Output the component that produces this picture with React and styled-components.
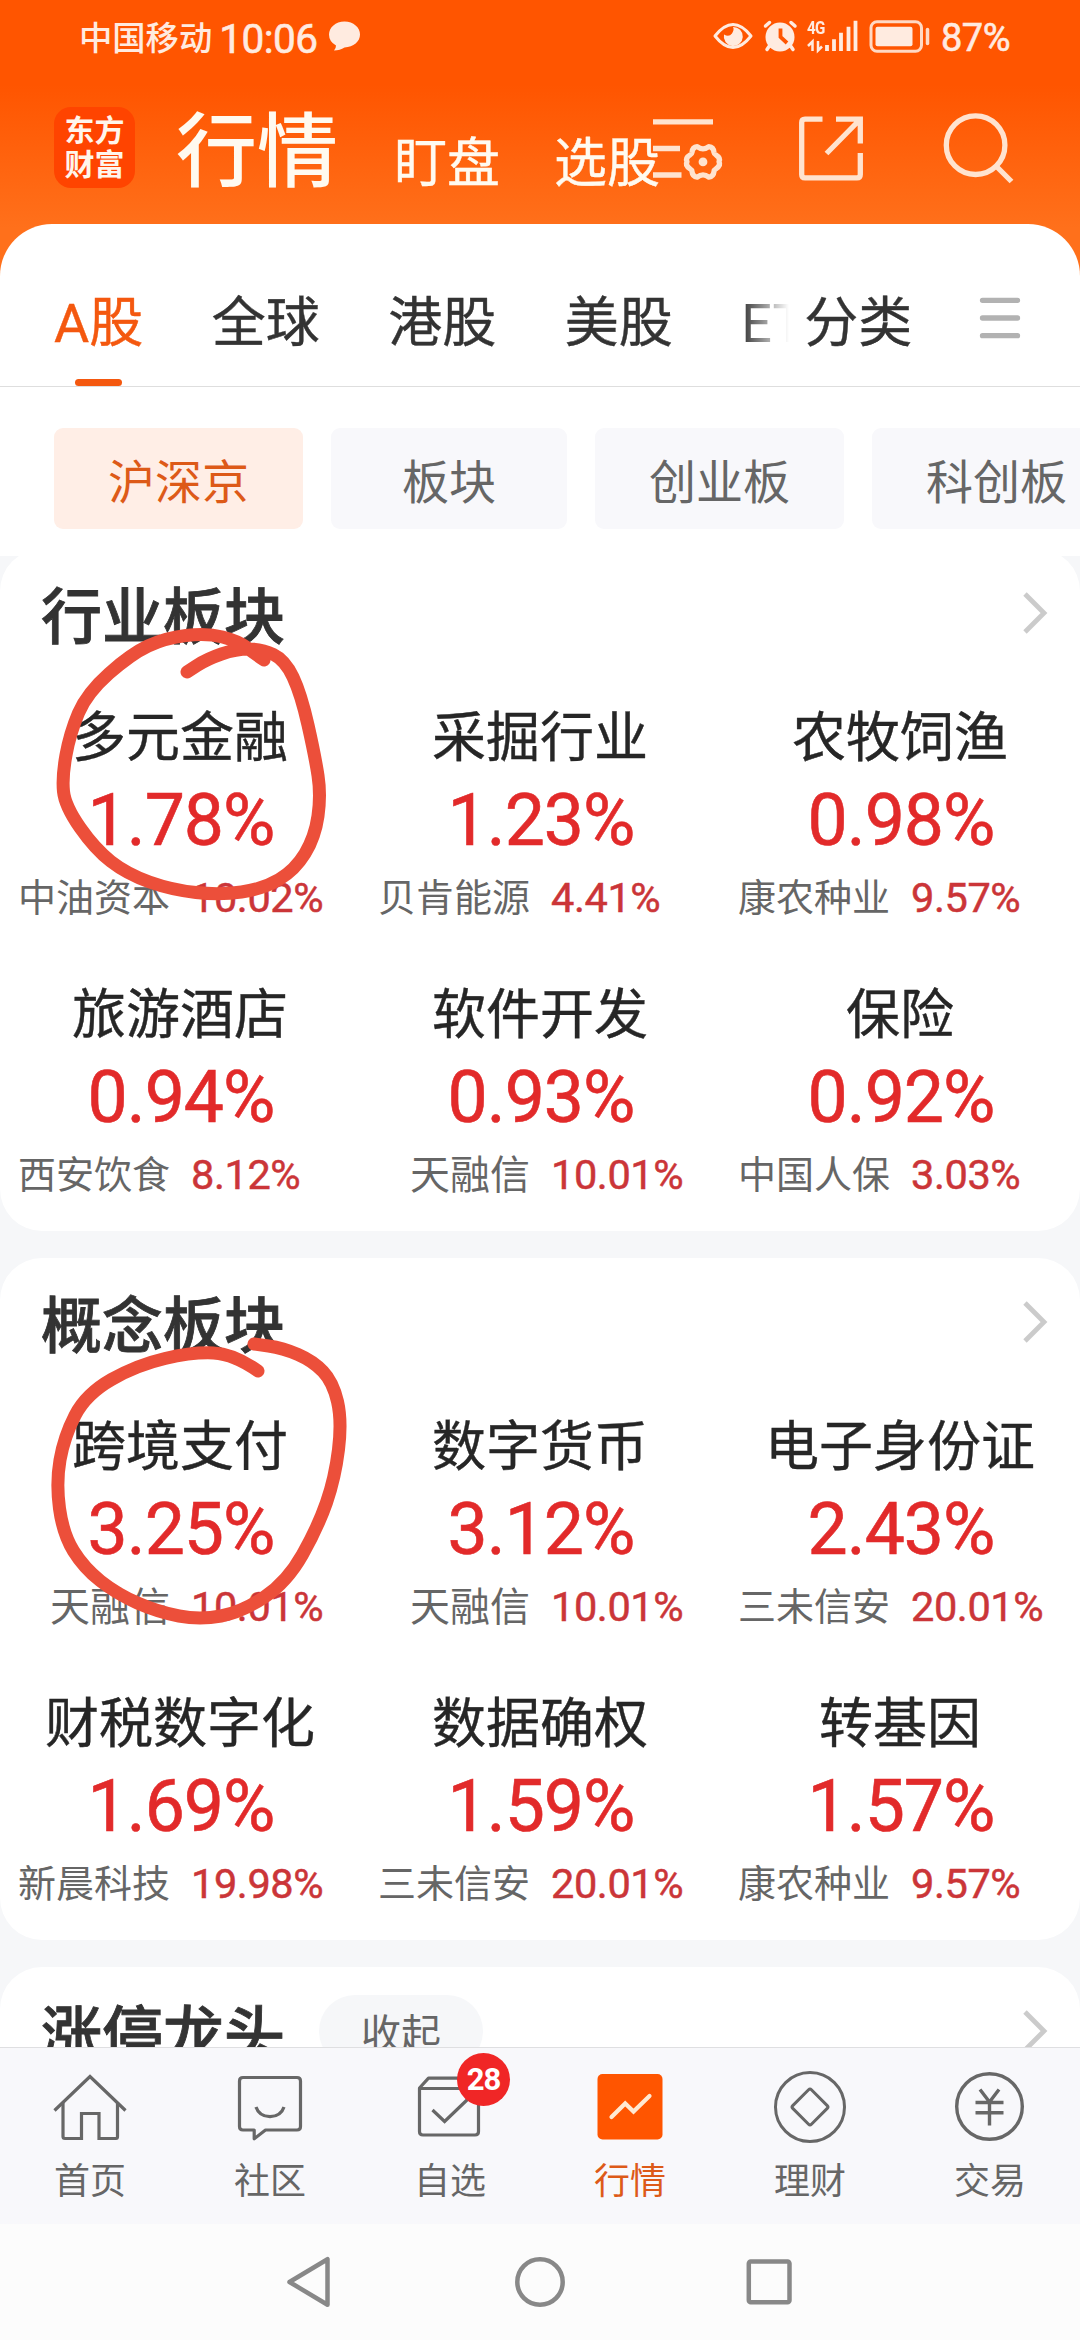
import styled, { createGlobalStyle } from "styled-components";

const industry = [
  { name: "多元金融", rate: "1.78%", stock: "中油资本", stockRate: "10.02%" },
  { name: "采掘行业", rate: "1.23%", stock: "贝肯能源", stockRate: "4.41%" },
  { name: "农牧饲渔", rate: "0.98%", stock: "康农种业", stockRate: "9.57%" },
  { name: "旅游酒店", rate: "0.94%", stock: "西安饮食", stockRate: "8.12%" },
  { name: "软件开发", rate: "0.93%", stock: "天融信", stockRate: "10.01%" },
  { name: "保险", rate: "0.92%", stock: "中国人保", stockRate: "3.03%" },
];

const concept = [
  { name: "跨境支付", rate: "3.25%", stock: "天融信", stockRate: "10.01%" },
  { name: "数字货币", rate: "3.12%", stock: "天融信", stockRate: "10.01%" },
  { name: "电子身份证", rate: "2.43%", stock: "三未信安", stockRate: "20.01%" },
  { name: "财税数字化", rate: "1.69%", stock: "新晨科技", stockRate: "19.98%" },
  { name: "数据确权", rate: "1.59%", stock: "三未信安", stockRate: "20.01%" },
  { name: "转基因", rate: "1.57%", stock: "康农种业", stockRate: "9.57%" },
];

const firstLoop = [
  [264, 660], [254, 653], [238, 641], [207, 633], [165, 638], [131, 654],
  [87, 693], [70, 733], [62, 777], [65, 806], [95, 849], [127, 874],
  [172, 890], [220, 895], [263, 889], [295, 870], [315, 837], [321, 795],
  [315, 756], [301, 694], [285, 660], [262, 649], [236, 649], [207, 659],
  [187, 672],
];

const secondLoop = [
  [258, 1371], [234, 1354], [193, 1352], [137, 1365], [86, 1394], [64, 1437],
  [56, 1483], [63, 1534], [84, 1568], [117, 1594], [158, 1612], [200, 1620],
  [242, 1612], [287, 1582], [318, 1527], [335, 1478], [342, 1421],
  [333, 1382], [313, 1361], [283, 1348], [254, 1344],
];

// joins the midpoints of a stroke with quadratic curves
function strokePath(points) {
  let d = `M${points[0].join(" ")}`;
  for (let i = 1; i < points.length - 1; i++) {
    const [x, y] = points[i];
    const [nx, ny] = points[i + 1];
    d += `Q${x} ${y} ${(x + nx) / 2} ${(y + ny) / 2}`;
  }
  return `${d}L${points[points.length - 1].join(" ")}`;
}

function StatusIcons() {
  return (
    <svg width="220" height="40" viewBox="712 17 220 40" fill="none">
      <path
        d="M715 36Q733 13 751 36Q733 59 715 36Z"
        stroke="#ffebe0"
        strokeWidth="3"
        strokeLinejoin="round"
      />
      <path
        d="M733 27A9.500 9.500 0 1 1 724 34.500Q729 37.500 732 33.500Q734.500 29.500 733 27Z"
        fill="#ffebe0"
      />
      <circle cx="780" cy="37" r="14.500" fill="#ffebe0" />
      <path
        d="M765.500 26L769.500 22.500M795 26L791 22.500M769 46.500L767 49.500M791 46.500L793 49.500"
        stroke="#ffebe0"
        strokeWidth="3.500"
        strokeLinecap="round"
      />
      <path d="M780.500 28.500V37L787 43" stroke="#ff5500" strokeWidth="3.800" />
      <path
        d="M808 46L812.500 41.500V51M818 41V50.500L822 46.500"
        stroke="#ffebe0"
        strokeWidth="2.500"
      />
      <path
        d="M827 51V45M834 51V39.300M841 51V32.700M848.500 51V26.700M855.500 51V20.700"
        stroke="#ffebe0"
        strokeWidth="3.800"
      />
      <rect x="871" y="21.800" width="50.500" height="29.500" rx="6" stroke="#ffd9c4" strokeWidth="3" />
      <rect x="875.500" y="26.700" width="37" height="19.600" rx="2" fill="#ffebe0" />
      <path d="M927.500 29.500V43.500" stroke="#ffd9c4" strokeWidth="3.500" strokeLinecap="round" />
    </svg>
  );
}

function HeaderIcons() {
  return (
    <svg width="370" height="80" viewBox="650 107.500 370 80" fill="none" stroke="#ffe3cf" strokeWidth="5.300">
      <path d="M653 121.300H713M653 148H680M653 174.500H681.500" />
      <path
        d="M697.200 146.200Q703 150.500 708.800 146.200Q713.500 146.500 714 152Q714.200 153.500 716 154.500Q721 157.500 719 161.300Q721 165 716 168.200Q714.200 169.200 714 171Q713.500 176.200 708.800 176.600Q703 172.200 697.200 176.600Q692.500 176.200 692 171Q691.800 169.200 690 168.200Q685 165 687 161.300Q685 157.500 690 154.500Q691.800 153.500 692 152Q692.500 146.500 697.200 146.200Z"
        strokeLinejoin="round"
      />
      <circle cx="703" cy="161.400" r="4.400" fill="#ffe3cf" stroke="none" />
      <path d="M822.500 118.600H805Q801.700 118.600 801.700 122V174Q801.700 177.400 805 177.400H857Q860.300 177.400 860.300 174V152.500" />
      <path d="M836 118.600H860.300V143M860 119L826.500 153" />
      <circle cx="975.600" cy="144.700" r="29.300" />
      <path d="M996 165.500L1011.500 181" />
    </svg>
  );
}

function Chevron() {
  return (
    <svg width="26" height="44" viewBox="0 0 26 44" fill="none">
      <path d="M3 3L22 22L3 41" stroke="#cbcbcb" strokeWidth="4.800" />
    </svg>
  );
}

function HomeIcon() {
  return (
    <svg width="76" height="76" viewBox="0 0 76 76" fill="none" stroke="#676767" strokeWidth="3.200">
      <path d="M2.500 41.500L38 7.500L73.500 41.500" />
      <path d="M11 34V67.500Q11 69.500 13 69.500H29.500V44.500H47V69.500H64Q65.500 69.500 65.500 67.500V34" />
    </svg>
  );
}

function ChatIcon() {
  return (
    <svg width="76" height="76" viewBox="0 0 76 76" fill="none" stroke="#676767" strokeWidth="3.200">
      <path
        d="M11 8.500H65Q68.500 8.500 68.500 12V57.500Q68.500 61 65 61H33.500L22.200 69.800V61H11Q7.500 61 7.500 57.500V12Q7.500 8.500 11 8.500Z"
        strokeLinejoin="round"
      />
      <path d="M24 38Q27 47.300 38 47.700Q49 47.300 52 38" />
    </svg>
  );
}

function PickIcon() {
  return (
    <svg width="76" height="76" viewBox="0 0 76 76" fill="none" stroke="#676767" strokeWidth="3.200">
      <path
        d="M7.500 19L16.500 9.200H58L66.500 19V62.500Q66.500 66 63 66H11Q7.500 66 7.500 62.500ZM7.500 19.500H66.500"
        strokeLinejoin="round"
      />
      <path d="M20.500 41L32.600 52.500L56 30" />
    </svg>
  );
}

function MarketIcon() {
  return (
    <svg width="76" height="76" viewBox="0 0 76 76" fill="none">
      <rect x="5.500" y="5" width="65" height="65.500" rx="5" fill="#ff5500" />
      <path
        d="M19.500 48L33.200 34.500L41.500 42.500L57.500 27"
        stroke="#ffe9d2"
        strokeWidth="4.200"
        strokeLinecap="round"
      />
    </svg>
  );
}

function WealthIcon() {
  return (
    <svg width="76" height="76" viewBox="0 0 76 76" fill="none" stroke="#676767" strokeWidth="3">
      <circle cx="38" cy="38" r="34.500" />
      <rect x="24.800" y="24.800" width="26.400" height="26.400" rx="2" transform="rotate(45 38 38)" />
    </svg>
  );
}

function TradeIcon() {
  return (
    <svg width="76" height="76" viewBox="0 0 76 76" fill="none" stroke="#676767" strokeWidth="3.400">
      <circle cx="37.500" cy="37.500" r="32.800" />
      <path d="M28 20.500L37.500 33L47 20.500M23.500 33.500H51.500M23.500 43.700H51.500M37.500 33V56.500" />
    </svg>
  );
}

const menu = [
  { label: "首页", icon: HomeIcon },
  { label: "社区", icon: ChatIcon },
  { label: "自选", icon: PickIcon, badge: "28" },
  { label: "行情", icon: MarketIcon, active: true },
  { label: "理财", icon: WealthIcon },
  { label: "交易", icon: TradeIcon },
];

function Board({ title, items }) {
  return (
    <Card>
      <Cardhead>
        <Cardtitle>{title}</Cardtitle>
        <Chevron />
      </Cardhead>
      <Boardgrid>
        {items.map((item) => (
          <Cell key={item.name}>
            <Cellname>{item.name}</Cellname>
            <Cellrate>{item.rate}</Cellrate>
            <Leader>
              <Leadername $small={item.stock.length > 3}>{item.stock}</Leadername>
              <Leaderrate>{item.stockRate}</Leaderrate>
            </Leader>
          </Cell>
        ))}
      </Boardgrid>
    </Card>
  );
}

function App() {
  return (
    <Screen>
      <Globalstyle />
      <Header>
        <Statusbar>
          <Carrier>中国移动</Carrier>
          <Clock>10:06</Clock>
          <Bubble width="33" height="30" viewBox="0 0 33 30">
            <path
              d="M16.500 0.500C25.500 0.500 32 6.500 32 13.500S25.500 26 16.500 26.500Q12 29.500 6 29.500Q8 27.500 8 24.500Q1 20.500 1 13.500C1 6.500 7.500 0.500 16.500 0.500Z"
              fill="#ffebe0"
            />
          </Bubble>
          <Statusright>
            <Network>4G</Network>
            <StatusIcons />
            <Battery>87%</Battery>
          </Statusright>
        </Statusbar>
        <Titlebar>
          <Logo>
            <span>东方</span>
            <span>财富</span>
          </Logo>
          <Titles>
            <Maintitle>行情</Maintitle>
            <Subtitle>盯盘</Subtitle>
            <Subtitle>选股</Subtitle>
          </Titles>
          <HeaderIcons />
        </Titlebar>
        <Sheet>
          <Tabs>
            <Tab $active>A股</Tab>
            <Tab>全球</Tab>
            <Tab>港股</Tab>
            <Tab>美股</Tab>
            <Fadingtab>ETF</Fadingtab>
            <Category>分类</Category>
            <svg width="42" height="44" viewBox="0 0 42 44">
              <path
                d="M3.500 4.300H38.500M3.500 22H38.500M3.500 39.700H38.500"
                stroke="#b2b2b2"
                strokeWidth="5.300"
                strokeLinecap="round"
              />
            </svg>
          </Tabs>
          <Chips>
            <Chip $active>沪深京</Chip>
            <Chip $width={236}>板块</Chip>
            <Chip>创业板</Chip>
            <Chip>科创板</Chip>
          </Chips>
        </Sheet>
      </Header>
      <Content>
        <Board title="行业板块" items={industry} />
        <Board title="概念板块" items={concept} />
        <Card>
          <Cardhead>
            <Cardtitle>涨停龙头</Cardtitle>
            <Collapse>收起</Collapse>
            <Chevron />
          </Cardhead>
        </Card>
      </Content>
      <Bottombar>
        {menu.map(({ label, icon: Icon, badge, active }) => (
          <Menuitem key={label} $active={active}>
            <Icon />
            {label}
            {badge && <Badge>{badge}</Badge>}
          </Menuitem>
        ))}
      </Bottombar>
      <Systembar>
        <svg width="56" height="56" viewBox="0 0 56 56" fill="none">
          <path d="M45.500 5.200V50.800L7.500 28Z" stroke="#888" strokeWidth="4.500" strokeLinejoin="round" />
        </svg>
        <svg width="56" height="56" viewBox="0 0 56 56" fill="none">
          <circle cx="28" cy="28" r="22.700" stroke="#888" strokeWidth="4.500" />
        </svg>
        <svg width="56" height="56" viewBox="0 0 56 56" fill="none">
          <rect x="6.800" y="7.500" width="40.700" height="40.700" rx="2" stroke="#888" strokeWidth="4.500" />
        </svg>
      </Systembar>
      <Marks viewBox="0 0 1080 2340">
        <path d={strokePath(firstLoop)} />
        <path d={strokePath(secondLoop)} />
      </Marks>
    </Screen>
  );
}

export default App;

const Globalstyle = createGlobalStyle`
  * {
    box-sizing: border-box;
  }
  body {
    margin: 0;
    font-family: "Noto Sans CJK SC", sans-serif;
  }
  svg {
    display: block;
    flex-shrink: 0;
  }
`;

const Screen = styled.div`
  position: relative;
  width: 1080px;
  height: 2340px;
  display: flex;
  flex-direction: column;
  overflow: hidden;
  background-color: #f6f7f9;
`;

const Header = styled.header`
  position: relative;
  z-index: 1;
  height: 556px;
  flex-shrink: 0;
  background: linear-gradient(#ff5500 85px, #ff701b 228px, #ff701b 290px, transparent 290px);
`;

const Statusbar = styled.div`
  height: 74px;
  padding-left: 79px;
  display: flex;
  align-items: center;
  color: #ffebe0;
`;

const Carrier = styled.span`
  margin-bottom: 3px;
  font-size: 33.300px;
  font-weight: 500;
  line-height: 40px;
`;

const Clock = styled.span`
  margin: 3px 10px 0 7px;
  font-family: Roboto, sans-serif;
  font-size: 40.500px;
  letter-spacing: -0.500px;
  line-height: 40px;
  -webkit-text-stroke: 0.600px #ffebe0;
`;

const Bubble = styled.svg`
  margin-bottom: 3px;
`;

const Statusright = styled.div`
  position: relative;
  margin-left: auto;
  padding-right: 70px;
  display: flex;
  align-items: center;
`;

const Network = styled.span`
  position: absolute;
  left: 95px;
  top: 2px;
  font-family: Roboto, sans-serif;
  font-size: 19px;
  font-weight: 700;
  letter-spacing: -1px;
  line-height: 20px;
  transform: scaleX(0.800);
  transform-origin: left;
`;

const Battery = styled.span`
  margin: 2px 0 0 9px;
  font-family: Roboto, sans-serif;
  font-size: 38px;
  letter-spacing: -0.500px;
  line-height: 40px;
  -webkit-text-stroke: 0.600px #ffebe0;
`;

const Titlebar = styled.div`
  height: 150px;
  padding: 0 60px 3px 54px;
  display: flex;
  align-items: center;
`;

const Logo = styled.div`
  width: 81px;
  height: 81px;
  flex-shrink: 0;
  padding-top: 4px;
  display: flex;
  flex-direction: column;
  align-items: center;
  border-radius: 17px;
  background-color: #ff4400;
  color: #fff5ec;
  font-size: 30px;
  font-weight: 700;
  line-height: 34px;
`;

const Titles = styled.div`
  width: 475px;
  margin: -4px 0 0 41px;
  flex-shrink: 0;
  display: flex;
  align-items: baseline;
  white-space: nowrap;
  color: #fffaf0;

  & + svg {
    margin-left: -1px;
  }
`;

const Maintitle = styled.span`
  font-size: 81px;
  font-weight: 500;
  line-height: 90px;
`;

const Subtitle = styled.span`
  position: relative;
  top: 2px;
  margin-left: 56px;
  font-size: 53px;
  line-height: 70px;
  -webkit-text-stroke: 0.400px #fffaf0;

  & + & {
    margin-left: 54px;
  }
`;

const Sheet = styled.div`
  height: 332px;
  border-radius: 52px 52px 0 0;
  background-color: #fff;
`;

const Tabs = styled.nav`
  height: 163px;
  padding: 30px 59px 0 54px;
  display: flex;
  align-items: flex-start;
  border-bottom: 1px solid #dedede;
  color: #333;
  font-family: Roboto, "Noto Sans CJK SC", sans-serif;
  font-size: 54px;
  line-height: 139px;
  -webkit-text-stroke: 0.400px;

  svg {
    margin: 42px 0 0 auto;
  }
`;

const Tab = styled.span`
  height: 132px;
  margin-right: 68.500px;
  display: flex;
  flex-direction: column;
  align-items: center;
  color: ${({ $active }) => ($active ? "#f4580f" : "#333")};

  &::after {
    content: "";
    width: 47px;
    height: 7px;
    margin-top: -14px;
    flex-shrink: 0;
    border-radius: 4px;
    background-color: ${({ $active }) => ($active ? "#f4580f" : "transparent")};
  }
`;

const Fadingtab = styled.span`
  width: 50px;
  height: 132px;
  overflow: hidden;
  -webkit-text-stroke: 0;
  mask-image: linear-gradient(to right, #000 0, transparent 48px);
`;

const Category = styled.span`
  margin-left: 13px;
`;

const Chips = styled.div`
  height: 169px;
  padding: 41px 0 0 54px;
  display: flex;
  gap: 28px;
  overflow: hidden;
`;

const Chip = styled.div`
  width: ${({ $width }) => $width || 249}px;
  height: 101px;
  flex-shrink: 0;
  border-radius: 9px;
  background-color: ${({ $active }) => ($active ? "#ffeee6" : "#f8f8fb")};
  color: ${({ $active }) => ($active ? "#dd5a18" : "#666")};
  font-size: 47px;
  line-height: 101px;
  text-align: center;
`;

const Content = styled.main`
  flex: 1;
  min-height: 0;
  margin-top: -7px;
  display: flex;
  flex-direction: column;
  gap: 27px;
  overflow: hidden;
`;

const Card = styled.section`
  height: 682px;
  flex-shrink: 0;
  border-radius: 42px;
  background-color: #fff;
`;

const Cardhead = styled.div`
  height: 127px;
  padding: 0 32px 0 41px;
  display: flex;
  align-items: center;

  svg {
    margin-left: auto;
  }
`;

const Cardtitle = styled.h2`
  margin: 1px 0 0;
  color: #333;
  font-size: 61px;
  font-weight: 500;
  line-height: 80px;
  -webkit-text-stroke: 0.800px #333;
`;

const Collapse = styled.button`
  width: 164px;
  height: 72px;
  margin-left: 34px;
  padding: 0;
  border: none;
  border-radius: 36px;
  background-color: #f6f7f9;
  color: #666;
  font-family: inherit;
  font-size: 40px;
  line-height: 72px;
`;

const Boardgrid = styled.div`
  display: grid;
  grid-template-columns: repeat(3, 360px);
  grid-auto-rows: 277px;
`;

const Cell = styled.div`
  padding-top: 23px;
  display: flex;
  flex-direction: column;
  align-items: center;
`;

const Cellname = styled.div`
  color: #262626;
  font-size: 54px;
  line-height: 70px;
  -webkit-text-stroke: 0.400px #262626;
`;

const Cellrate = styled.div`
  margin: 16px 0 18px 2px;
  color: #e22a2a;
  font-family: Roboto, sans-serif;
  font-size: 71.500px;
  letter-spacing: -1px;
  line-height: 72px;
  -webkit-text-stroke: 0.600px #e22a2a;
`;

const Leader = styled.div`
  width: 100%;
  display: grid;
  grid-template-columns: 170px 1fr;
  column-gap: 21px;
  line-height: 40px;
`;

const Leadername = styled.span`
  color: #666;
  font-size: ${({ $small }) => ($small ? 38 : 40)}px;
  text-align: right;
`;

const Leaderrate = styled.span`
  padding-top: 3px;
  color: #cb3538;
  font-family: Roboto, sans-serif;
  font-size: 41.500px;
  letter-spacing: -0.400px;
  -webkit-text-stroke: 0.500px #cb3538;
`;

const Bottombar = styled.nav`
  height: 177px;
  flex-shrink: 0;
  display: grid;
  grid-template-columns: repeat(6, 1fr);
  border-top: 1px solid #dfdfe1;
  background-color: #f8f8fb;
`;

const Menuitem = styled.div`
  position: relative;
  padding-top: 21px;
  display: flex;
  flex-direction: column;
  align-items: center;
  color: ${({ $active }) => ($active ? "#dd5a18" : "#666")};
  font-size: 36px;
  line-height: 60px;

  svg {
    margin-bottom: 3px;
  }
`;

const Badge = styled.span`
  position: absolute;
  top: 5px;
  left: 97px;
  width: 53px;
  height: 53px;
  border-radius: 50%;
  background-color: #f02626;
  color: #fff;
  font-family: Roboto, sans-serif;
  font-size: 31px;
  font-weight: 700;
  letter-spacing: -1px;
  line-height: 54px;
  text-align: center;
`;

const Systembar = styled.div`
  height: 116px;
  flex-shrink: 0;
  display: flex;
  align-items: center;
  justify-content: center;
  gap: 174px;
  background-color: #fcfcfc;
`;

const Marks = styled.svg`
  position: absolute;
  z-index: 2;
  top: 0;
  left: 0;
  width: 1080px;
  height: 2340px;
  pointer-events: none;
  fill: none;
  stroke: #ec4f3a;
  stroke-width: 13px;
  stroke-linecap: round;
  stroke-linejoin: round;
`;
